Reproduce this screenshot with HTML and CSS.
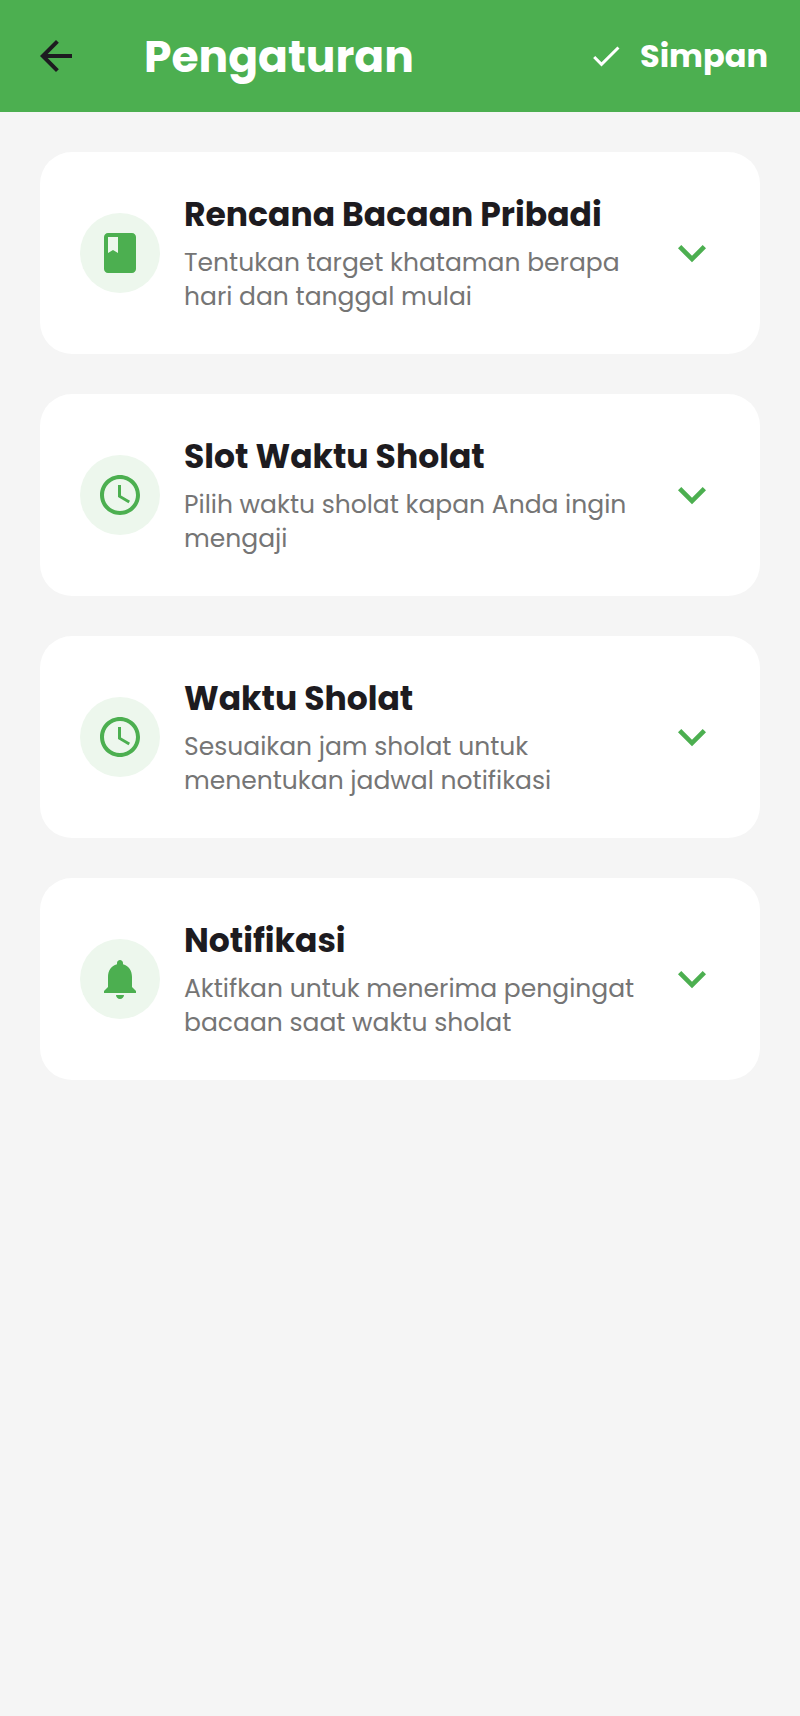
FILE: index.html
```html
<!DOCTYPE html>
<html lang="id">
<head>
    <meta charset="UTF-8">
    <meta name="viewport" content="width=device-width, initial-scale=1.0">
    <title>Pengaturan</title>
    <link rel="stylesheet" href="styles.css">
</head>
<body>
    <header class="topbar">
        <button type="button" class="back" aria-label="Kembali">
            <svg class="icon" viewBox="0 0 24 24"><path d="M20 11H7.83l5.59-5.59L12 4l-8 8 8 8 1.41-1.41L7.83 13H20v-2z"/></svg>
        </button>
        <h1>Pengaturan</h1>
        <button type="button" class="save">
            <svg class="icon-check" viewBox="0 0 24 24"><path d="M9 16.17L4.83 12l-1.42 1.41L9 19 21 7l-1.41-1.41z"/></svg>
            Simpan
        </button>
    </header>

    <main class="list">
        <button type="button" class="card" aria-expanded="false">
            <span class="badge">
                <svg class="icon" viewBox="0 0 24 24"><path d="M18 2H6c-1.1 0-2 .9-2 2v16c0 1.1.9 2 2 2h12c1.1 0 2-.9 2-2V4c0-1.1-.9-2-2-2zM6 4h5v8l-2.5-1.5L6 12V4z"/></svg>
            </span>
            <span class="text">
                <span class="title">Rencana Bacaan Pribadi</span>
                <span class="desc">Tentukan target khataman berapa hari dan tanggal mulai</span>
            </span>
            <svg class="chevron" viewBox="0 0 24 24"><path d="M16.59 8.59L12 13.17 7.41 8.59 6 10l6 6 6-6z"/></svg>
        </button>

        <button type="button" class="card" aria-expanded="false">
            <span class="badge">
                <svg class="icon" viewBox="0 0 24 24"><path d="M11.99 2C6.47 2 2 6.48 2 12s4.47 10 9.99 10C17.52 22 22 17.52 22 12S17.52 2 11.99 2zM12 20c-4.42 0-8-3.58-8-8s3.58-8 8-8 8 3.58 8 8-3.58 8-8 8zm.5-13H11v6l5.25 3.15.75-1.23-4.5-2.67z"/></svg>
            </span>
            <span class="text">
                <span class="title">Slot Waktu Sholat</span>
                <span class="desc">Pilih waktu sholat kapan Anda ingin mengaji</span>
            </span>
            <svg class="chevron" viewBox="0 0 24 24"><path d="M16.59 8.59L12 13.17 7.41 8.59 6 10l6 6 6-6z"/></svg>
        </button>

        <button type="button" class="card" aria-expanded="false">
            <span class="badge">
                <svg class="icon" viewBox="0 0 24 24"><path d="M11.99 2C6.47 2 2 6.48 2 12s4.47 10 9.99 10C17.52 22 22 17.52 22 12S17.52 2 11.99 2zM12 20c-4.42 0-8-3.58-8-8s3.58-8 8-8 8 3.58 8 8-3.58 8-8 8zm.5-13H11v6l5.25 3.15.75-1.23-4.5-2.67z"/></svg>
            </span>
            <span class="text">
                <span class="title">Waktu Sholat</span>
                <span class="desc">Sesuaikan jam sholat untuk menentukan jadwal notifikasi</span>
            </span>
            <svg class="chevron" viewBox="0 0 24 24"><path d="M16.59 8.59L12 13.17 7.41 8.59 6 10l6 6 6-6z"/></svg>
        </button>

        <button type="button" class="card" aria-expanded="false">
            <span class="badge">
                <svg class="icon" viewBox="0 0 24 24"><path d="M12 22c1.1 0 2-.9 2-2h-4c0 1.1.89 2 2 2zm6-6v-5c0-3.07-1.64-5.64-4.5-6.32V4c0-.83-.67-1.5-1.5-1.5s-1.5.67-1.5 1.5v.68C7.63 5.36 6 7.92 6 11v5l-2 2v1h16v-1l-2-2z"/></svg>
            </span>
            <span class="text">
                <span class="title">Notifikasi</span>
                <span class="desc">Aktifkan untuk menerima pengingat bacaan saat waktu sholat</span>
            </span>
            <svg class="chevron" viewBox="0 0 24 24"><path d="M16.59 8.59L12 13.17 7.41 8.59 6 10l6 6 6-6z"/></svg>
        </button>
    </main>
</body>
</html>
```
FILE: styles.css
```css
* {
    box-sizing: border-box;
}

body {
    margin: 0;
    background: #f5f5f5;
    color: #1d1b20;
    font-family: Poppins, Inter, sans-serif;
}

button {
    border: none;
    background: none;
    padding: 0;
    font: inherit;
    color: inherit;
    cursor: pointer;
}

svg {
    display: block;
    flex-shrink: 0;
    fill: currentColor;
}

.icon {
    width: 48px;
    height: 48px;
}

/* top bar */
.topbar {
    display: flex;
    align-items: center;
    height: 112px;
    padding: 0 32px;
    background: #4caf50;
    color: white;
}

.back {
    color: #1d1b20;
}

.topbar h1 {
    flex: 1;
    margin: 0 0 0 64px;
    font-size: 44px;
    font-weight: 700;
}

.save {
    display: flex;
    align-items: center;
    gap: 16px;
    font-size: 32px;
    font-weight: 700;
}

.icon-check {
    width: 36px;
    height: 36px;
}

/* settings */
.list {
    display: flex;
    flex-direction: column;
    gap: 40px;
    padding: 40px;
}

.card {
    display: flex;
    align-items: center;
    gap: 24px;
    padding: 40px;
    border-radius: 32px;
    background: white;
    text-align: left;
}

.badge {
    display: flex;
    align-items: center;
    justify-content: center;
    flex-shrink: 0;
    width: 80px;
    height: 80px;
    border-radius: 50%;
    background: #edf7ed;
    color: #4caf50;
}

.text {
    display: flex;
    flex-direction: column;
    gap: 8px;
    flex: 1;
}

.title {
    font-size: 33px;
    line-height: 46px;
    font-weight: 700;
}

.desc {
    font-size: 25px;
    line-height: 34px;
    color: #757575;
}

.chevron {
    width: 56px;
    height: 56px;
    color: #4caf50;
}
```
